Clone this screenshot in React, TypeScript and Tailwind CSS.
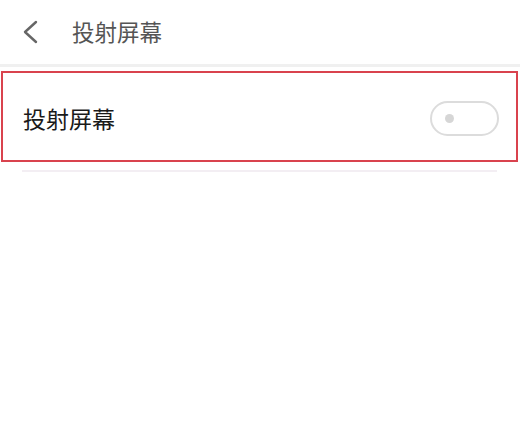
export default function App() {
  return (
    <div
      className="w-[520px] h-[448px] bg-white overflow-hidden"
      style={{ fontFamily: '"Noto Sans CJK SC", "Noto Sans", sans-serif' }}
    >
      <div className="h-[64px] flex items-center">
        <svg className="ml-[20px] w-[20px] h-[26px]" viewBox="0 0 20 26" fill="none">
          <path d="M16 3 L5 13 L16 23" stroke="#666" strokeWidth="2.4" strokeLinecap="round" strokeLinejoin="round" />
        </svg>
        <div className="ml-[32px] text-[22.5px] leading-none text-[#555] mb-[2px]">投射屏幕</div>
      </div>
      <div className="h-[3px] bg-[#f0f0f0]" />
      <div className="h-[4px]" />
      <div className="mx-[1px] w-[517px] h-[91px] border-[2.5px] border-[#d9434e] flex items-center justify-between">
        <div className="ml-[20px] text-[23px] leading-none text-[#1a1a1a] mt-[4px]">投射屏幕</div>
        <div className="mr-[17px] mt-[4px] w-[69px] h-[35px] rounded-full border-[2.5px] border-[#dcdcdc] flex items-center">
          <div className="ml-[13px] w-[9px] h-[9px] rounded-full bg-[#d6d6d6]" />
        </div>
      </div>
      <div className="mt-[8px] ml-[22px] w-[475px] h-[1.5px] bg-[#f3eef3]" />
    </div>
  )
}
